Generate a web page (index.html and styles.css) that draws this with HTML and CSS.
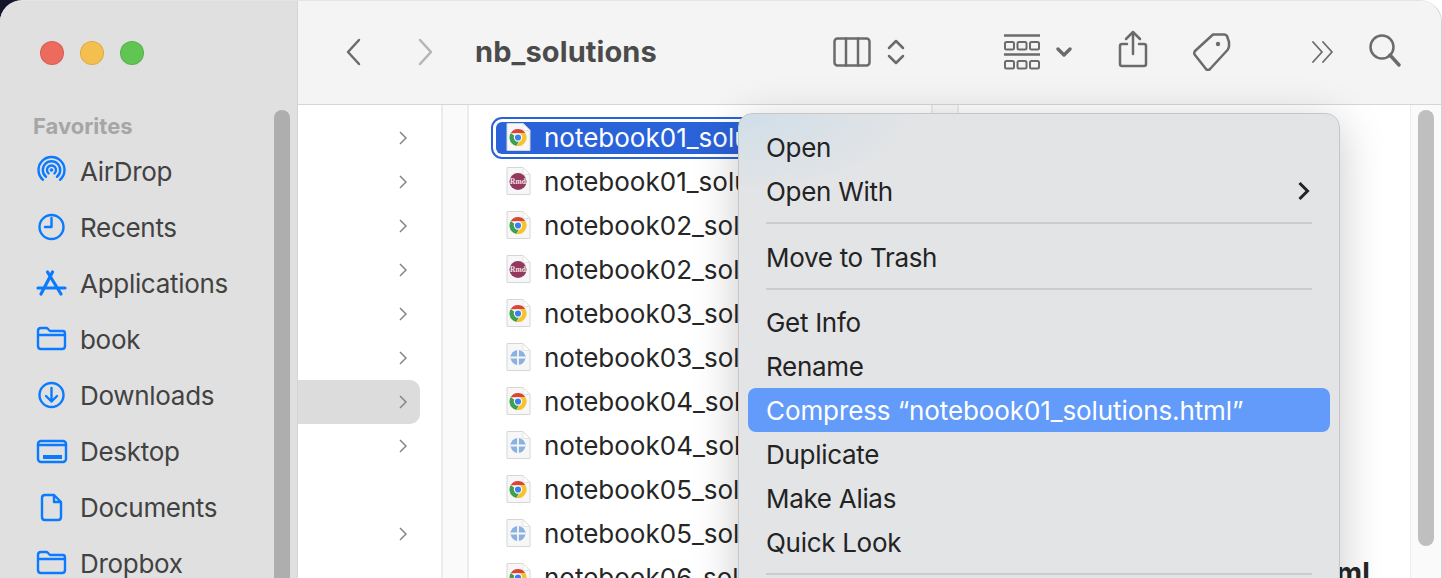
FILE: index.html
```html
<!DOCTYPE html>
<html lang="en">

<head>
  <meta charset="UTF-8">
  <title>nb_solutions</title>
  <link rel="stylesheet" href="styles.css">
</head>

<body>

  <!-- File type icons, reused by the rows below -->
  <svg class="defs" width="0" height="0">
    <symbol id="doc" viewBox="0 0 26 30">
      <path d="M2 1.500H18L25 8.500V28.500H2Z" fill="#f7f7f7" stroke="#d6d6d6"/>
      <path d="M18 1.500V8.500H25Z" fill="#fff" stroke="#e4e4e4"/>
    </symbol>
    <symbol id="chrome" viewBox="0 0 26 30">
      <use href="#doc"/>
      <path d="M5.600 11.300A8.500 8.500 0 0 1 20.400 11.300H13Z" fill="#db4437"/>
      <path d="M5.600 11.300A8.500 8.500 0 0 0 11.500 23.900L15 17Z" fill="#3f9f4f"/>
      <path d="M20.400 11.300A8.500 8.500 0 0 1 11.500 23.900L15.500 17.500L13 11.300Z" fill="#f5c330"/>
      <circle cx="13" cy="15.500" r="4.200" fill="#fff"/>
      <circle cx="13" cy="15.500" r="3.100" fill="#3f7fe8"/>
    </symbol>
    <symbol id="rmd" viewBox="0 0 26 30">
      <use href="#doc"/>
      <circle cx="13" cy="15.500" r="8.500" fill="#93395e"/>
      <text x="13" y="18" class="rmd-label">Rmd</text>
    </symbol>
    <symbol id="globe" viewBox="0 0 26 30">
      <use href="#doc"/>
      <circle cx="13" cy="15.500" r="7.500" fill="#8ab1df"/>
      <path d="M13 8V23M5.500 15.500H20.500" stroke="#f7f7f7" stroke-width="1.800"/>
    </symbol>
    <symbol id="chevron" viewBox="0 0 8 14">
      <path d="M1 1L7 7L1 13" fill="none" stroke="#858585" stroke-width="1.500"/>
    </symbol>
    <symbol id="folder" viewBox="0 0 36 36">
      <path d="M5 10Q5 7 8 7H14L17 10H30Q32 10 32 13V25Q32 28 29 28H8Q5 28 5 25ZM5 14H32"/>
    </symbol>
  </svg>

  <div class="window">

    <!-- Sidebar -->
    <aside class="sidebar">
      <div class="lights">
        <span class="light light-red"></span>
        <span class="light light-yellow"></span>
        <span class="light light-green"></span>
      </div>
      <div class="side-title">Favorites</div>
      <div class="side-item">
        <svg class="side-icon" viewBox="0 0 36 36">
          <path d="M10 26.800A13 13 0 1 1 27 26.800M13 23.700A8.700 8.700 0 1 1 24 23.700M15.500 20.400A4.500 4.500 0 1 1 21.500 20.400"/>
          <circle class="solid" cx="18.500" cy="17" r="1.800"/>
        </svg>
        AirDrop
      </div>
      <div class="side-item">
        <svg class="side-icon" viewBox="0 0 36 36">
          <circle cx="18.500" cy="18" r="12"/>
          <path d="M18.500 9V18H12"/>
        </svg>
        Recents
      </div>
      <div class="side-item">
        <svg class="side-icon" viewBox="0 0 36 36">
          <path class="thick" d="M19.500 7L8 29M14.500 7L28 29M5 23H32"/>
        </svg>
        Applications
      </div>
      <div class="side-item">
        <svg class="side-icon"><use href="#folder"/></svg>
        book
      </div>
      <div class="side-item">
        <svg class="side-icon" viewBox="0 0 36 36">
          <circle cx="18.500" cy="18" r="12"/>
          <path d="M18.500 11V24.500M13 19L18.500 24.500L24 19"/>
        </svg>
        Downloads
      </div>
      <div class="side-item">
        <svg class="side-icon" viewBox="0 0 36 36">
          <rect x="5" y="8" width="28" height="21" rx="3"/>
          <path d="M5 12H33"/>
          <rect class="solid" x="10" y="22" width="19" height="4"/>
        </svg>
        Desktop
      </div>
      <div class="side-item">
        <svg class="side-icon" viewBox="0 0 36 36">
          <path d="M12 6H21L28 13V28Q28 31 25 31H12Q9 31 9 28V9Q9 6 12 6ZM21 6V13H28"/>
        </svg>
        Documents
      </div>
      <div class="side-item">
        <svg class="side-icon"><use href="#folder"/></svg>
        Dropbox
      </div>
      <div class="side-thumb"></div>
    </aside>

    <main class="main">

      <!-- Toolbar -->
      <header class="toolbar">
        <svg class="tool nav" width="16" height="28" viewBox="0 0 16 28"><path d="M14 2L3 14L14 26"/></svg>
        <svg class="tool nav nav-forward" width="16" height="28" viewBox="0 0 16 28"><path d="M2 2L13 14L2 26"/></svg>
        <h1 class="title">nb_solutions</h1>

        <div class="tools">
          <div class="tool-group">
            <svg class="tool" width="38" height="30" viewBox="0 0 38 30">
              <rect x="1.500" y="1.500" width="35" height="27" rx="3"/>
              <path d="M13 1.500V28.500M25 1.500V28.500"/>
            </svg>
            <svg class="tool" width="18" height="26" viewBox="0 0 18 26"><path d="M2 9L9 2L16 9M2 17L9 24L16 17"/></svg>
          </div>
          <div class="tool-group group-gallery">
            <svg class="tool" width="36" height="36" viewBox="0 0 36 36">
              <path d="M0 1.500H36M0 20.500H36"/>
              <rect class="thin" x="1" y="8" width="9" height="7.500" rx="1.500"/>
              <rect class="thin" x="13.500" y="8" width="9" height="7.500" rx="1.500"/>
              <rect class="thin" x="26" y="8" width="9" height="7.500" rx="1.500"/>
              <rect class="thin" x="1" y="27" width="9" height="7.500" rx="1.500"/>
              <rect class="thin" x="13.500" y="27" width="9" height="7.500" rx="1.500"/>
              <rect class="thin" x="26" y="27" width="9" height="7.500" rx="1.500"/>
            </svg>
            <svg class="tool" width="16" height="10" viewBox="0 0 16 10"><path class="thick" d="M2 2L8 8L14 2"/></svg>
          </div>
          <svg class="tool tool-share" width="30" height="38" viewBox="0 0 30 38">
            <path d="M15 24V2M8 9L15 2L22 9M9 14H4Q2 14 2 16V34Q2 36 4 36H26Q28 36 28 34V16Q28 14 26 14H21"/>
          </svg>
          <svg class="tool tool-tag" width="38" height="38" viewBox="0 0 38 38">
            <path d="M20 1.500H31Q33 1.500 34 3L36 9V13Q36 15 34.500 17L17 36Q15 38 13 36L2 22Q0.500 20 2 18Z"/>
            <circle class="solid" cx="25" cy="11" r="2.200"/>
          </svg>
          <svg class="tool tool-more" width="24" height="22" viewBox="0 0 24 22"><path d="M2 1L11 11L2 21M12 1L21 11L12 21"/></svg>
          <svg class="tool tool-search" width="32" height="33" viewBox="0 0 32 33">
            <circle cx="13" cy="13" r="11.500"/>
            <path class="thick" d="M21 21L30 31"/>
          </svg>
        </div>
      </header>

      <!-- Column browser -->
      <div class="browser">
        <div class="column column-parent">
          <div class="parent-row"><svg class="chevron"><use href="#chevron"/></svg></div>
          <div class="parent-row"><svg class="chevron"><use href="#chevron"/></svg></div>
          <div class="parent-row"><svg class="chevron"><use href="#chevron"/></svg></div>
          <div class="parent-row"><svg class="chevron"><use href="#chevron"/></svg></div>
          <div class="parent-row"><svg class="chevron"><use href="#chevron"/></svg></div>
          <div class="parent-row"><svg class="chevron"><use href="#chevron"/></svg></div>
          <div class="parent-row parent-active"><svg class="chevron"><use href="#chevron"/></svg></div>
          <div class="parent-row"><svg class="chevron"><use href="#chevron"/></svg></div>
          <div class="parent-row"></div>
          <div class="parent-row"><svg class="chevron"><use href="#chevron"/></svg></div>
        </div>
        <div class="gutter"></div>

        <div class="column column-files">
          <div class="file-row file-selected"><svg class="file-icon"><use href="#chrome"/></svg><span class="file-name">notebook01_solutions.html</span></div>
          <div class="file-row"><svg class="file-icon"><use href="#rmd"/></svg><span class="file-name">notebook01_solutions.Rmd</span></div>
          <div class="file-row"><svg class="file-icon"><use href="#chrome"/></svg><span class="file-name">notebook02_solutions.html</span></div>
          <div class="file-row"><svg class="file-icon"><use href="#rmd"/></svg><span class="file-name">notebook02_solutions.Rmd</span></div>
          <div class="file-row"><svg class="file-icon"><use href="#chrome"/></svg><span class="file-name">notebook03_solutions.html</span></div>
          <div class="file-row"><svg class="file-icon"><use href="#globe"/></svg><span class="file-name">notebook03_solutions.qmd</span></div>
          <div class="file-row"><svg class="file-icon"><use href="#chrome"/></svg><span class="file-name">notebook04_solutions.html</span></div>
          <div class="file-row"><svg class="file-icon"><use href="#globe"/></svg><span class="file-name">notebook04_solutions.qmd</span></div>
          <div class="file-row"><svg class="file-icon"><use href="#chrome"/></svg><span class="file-name">notebook05_solutions.html</span></div>
          <div class="file-row"><svg class="file-icon"><use href="#globe"/></svg><span class="file-name">notebook05_solutions.qmd</span></div>
          <div class="file-row"><svg class="file-icon"><use href="#chrome"/></svg><span class="file-name">notebook06_solutions.html</span></div>
        </div>
        <div class="gutter"></div>

        <div class="column column-preview">
          <div class="preview-name">notebook01_solutions.html</div>
        </div>
        <div class="scroll-track"><div class="scroll-thumb"></div></div>
      </div>
    </main>

    <!-- Context menu -->
    <div class="menu">
      <div class="menu-item">Open</div>
      <div class="menu-item">Open With
        <svg class="menu-arrow" width="14" height="20" viewBox="0 0 14 20"><path d="M2.500 2L10.500 10L2.500 18"/></svg>
      </div>
      <div class="menu-sep"></div>
      <div class="menu-item">Move to Trash</div>
      <div class="menu-sep"></div>
      <div class="menu-item">Get Info</div>
      <div class="menu-item">Rename</div>
      <div class="menu-item menu-active">Compress “notebook01_solutions.html”</div>
      <div class="menu-item">Duplicate</div>
      <div class="menu-item">Make Alias</div>
      <div class="menu-item">Quick Look</div>
      <div class="menu-sep"></div>
      <div class="menu-item">Copy</div>
    </div>

  </div>

</body>

</html>
```

FILE: styles.css
```css
/* Global Styles */
html,
body {
  margin: 0;
  padding: 0;
  height: 100%;
  overflow: hidden;
  font-family: 'Inter', 'Liberation Sans', sans-serif;
}

body {
  background: linear-gradient(90deg, #15152a 50%, #ffffff 50%);
}

.defs {
  position: absolute;
}

.rmd-label {
  font-family: 'Liberation Serif', serif;
  font-size: 7.500px;
  font-weight: 700;
  fill: #f3e3ea;
  text-anchor: middle;
}

.window {
  position: relative;
  display: flex;
  height: 578px;
  overflow: hidden;
  border-radius: 22px 22px 0 0;
  background-color: #fff;
  box-sizing: border-box;
  border-top: 1px solid #e4e4e4;
  border-right: 1px solid #d2d2d2;
}

/* Sidebar */
.sidebar {
  position: relative;
  flex: 0 0 298px;
  box-sizing: border-box;
  background-color: #e0e0e0;
  border-right: 1px solid #d4d4d4;
  color: #424242;
  font-size: 26px;
  letter-spacing: -0.3px;
}

.lights {
  display: flex;
  gap: 16px;
  align-items: center;
  height: 103px;
  padding-left: 40px;
}

.light {
  width: 22px;
  height: 22px;
  border-radius: 50%;
  border: 1px solid rgba(0, 0, 0, 0.1);
}

.light-red {
  background-color: #ed6a5e;
}

.light-yellow {
  background-color: #f5bf4f;
}

.light-green {
  background-color: #61c554;
}

.side-title {
  display: flex;
  align-items: center;
  height: 34px;
  margin-top: 5px;
  padding-left: 33px;
  font-size: 22px;
  font-weight: 700;
  letter-spacing: 0;
  color: #a6a6a6;
}

.side-item {
  display: flex;
  align-items: center;
  gap: 11px;
  height: 56px;
  padding-left: 33px;
}

.side-icon {
  flex: none;
  width: 36px;
  height: 36px;
  fill: none;
  stroke: #0a7aff;
  stroke-width: 2.400;
  stroke-linecap: round;
  stroke-linejoin: round;
}

.side-icon .solid {
  fill: #0a7aff;
  stroke: none;
}

.side-icon .thick {
  stroke-width: 3.200;
}

.side-thumb {
  position: absolute;
  top: 109px;
  bottom: -20px;
  left: 274px;
  width: 16px;
  border-radius: 8px;
  background-color: #aeaeae;
}

/* Toolbar */
.main {
  flex: 1;
  display: flex;
  flex-direction: column;
  min-width: 0;
}

.toolbar {
  flex: 0 0 104px;
  display: flex;
  align-items: center;
  box-sizing: border-box;
  padding: 0 40px 2px 47px;
  background-color: #f4f4f4;
  border-bottom: 1px solid #d6d6d6;
}

.tool {
  flex: none;
  fill: none;
  stroke: #6b6b6b;
  stroke-width: 2.500;
  stroke-linecap: round;
  stroke-linejoin: round;
}

.tool .thin {
  stroke-width: 2;
}

.tool .thick {
  stroke-width: 3.400;
}

.tool .solid {
  fill: #6b6b6b;
  stroke: none;
}

.nav-forward {
  margin-left: 57px;
  stroke: #b4b4b4;
}

.title {
  margin: 0 0 0 41px;
  font-size: 29px;
  font-weight: 700;
  letter-spacing: 0.1px;
  color: #4b4b4b;
}

.tools {
  display: flex;
  align-items: center;
  margin-left: auto;
}

.tool-group {
  display: flex;
  align-items: center;
  gap: 16px;
}

.group-gallery {
  margin-left: 99px;
}

.tool-share {
  margin-left: 46px;
  margin-bottom: 5px;
}

.tool-tag {
  margin-left: 45px;
}

.tool-more {
  margin-left: 80px;
  stroke-width: 1.800;
}

.tool-search {
  margin-left: 34px;
  margin-bottom: 3px;
}

/* Column browser */
.browser {
  flex: 1;
  display: flex;
  min-height: 0;
}

.column {
  box-sizing: border-box;
  overflow: hidden;
  padding-top: 11px;
}

.column-parent {
  flex: 0 0 143px;
}

.parent-row {
  display: flex;
  align-items: center;
  justify-content: flex-end;
  box-sizing: border-box;
  height: 44px;
  margin-right: 21px;
  padding: 0 13px 1px 0;
}

.parent-active {
  border-radius: 0 10px 10px 0;
  background-color: #dcdcdc;
}

.chevron {
  width: 8px;
  height: 14px;
}

.gutter {
  flex: 0 0 28px;
  box-sizing: border-box;
  background-color: #fafafa;
  border-left: 2px solid #ececec;
  border-right: 2px solid #ececec;
}

.column-files {
  flex: 0 0 462px;
  padding-left: 27px;
}

.file-row {
  display: flex;
  align-items: center;
  gap: 13px;
  box-sizing: border-box;
  height: 44px;
  padding: 0 0 2px 9px;
  font-size: 26px;
  color: #262626;
  white-space: nowrap;
}

.file-selected {
  height: 32px;
  margin: 6px 4px 6px 0;
  border-radius: 6px;
  background-color: #2a62d9;
  outline: 2px solid #2a62d9;
  outline-offset: 3px;
  color: #fff;
}

.file-icon {
  flex: none;
  width: 26px;
  height: 30px;
}

.column-preview {
  flex: 1;
  min-width: 0;
  padding-top: 451px;
}

.preview-name {
  font-size: 28px;
  font-weight: 700;
  text-align: center;
  color: #262626;
  white-space: nowrap;
}

.scroll-track {
  flex: 0 0 31px;
  padding: 5px 0 0 7px;
  box-sizing: border-box;
  background-color: #fafafa;
  border-left: 1px solid #ececec;
}

.scroll-thumb {
  width: 16px;
  height: 436px;
  border-radius: 8px;
  background-color: #bfbfbf;
}

/* Context Menu */
.menu {
  position: absolute;
  top: 112px;
  left: 738px;
  box-sizing: border-box;
  width: 602px;
  padding: 11px 9px;
  border: 1px solid #c6c6c6;
  border-radius: 14px;
  background: radial-gradient(ellipse 180px 80px at 0 0, #d0dee8, #e3e4e6);
  box-shadow: 0 10px 45px rgba(0, 0, 0, 0.22);
  font-size: 26px;
  letter-spacing: -0.3px;
  color: #232323;
}

.menu-item {
  display: flex;
  align-items: center;
  justify-content: space-between;
  box-sizing: border-box;
  height: 44px;
  padding: 0 18px;
  border-radius: 8px;
  white-space: nowrap;
}

.menu-active {
  background-color: #639bfb;
  letter-spacing: -0.1px;
  color: #fff;
}

.menu-sep {
  height: 2px;
  margin: 9px 18px 11px;
  background-color: #cbccce;
}

.menu-sep + .menu-item + .menu-sep {
  margin-bottom: 10px;
}

.menu-arrow {
  margin-right: 1px;
  fill: none;
  stroke: #232323;
  stroke-width: 3;
}
```
